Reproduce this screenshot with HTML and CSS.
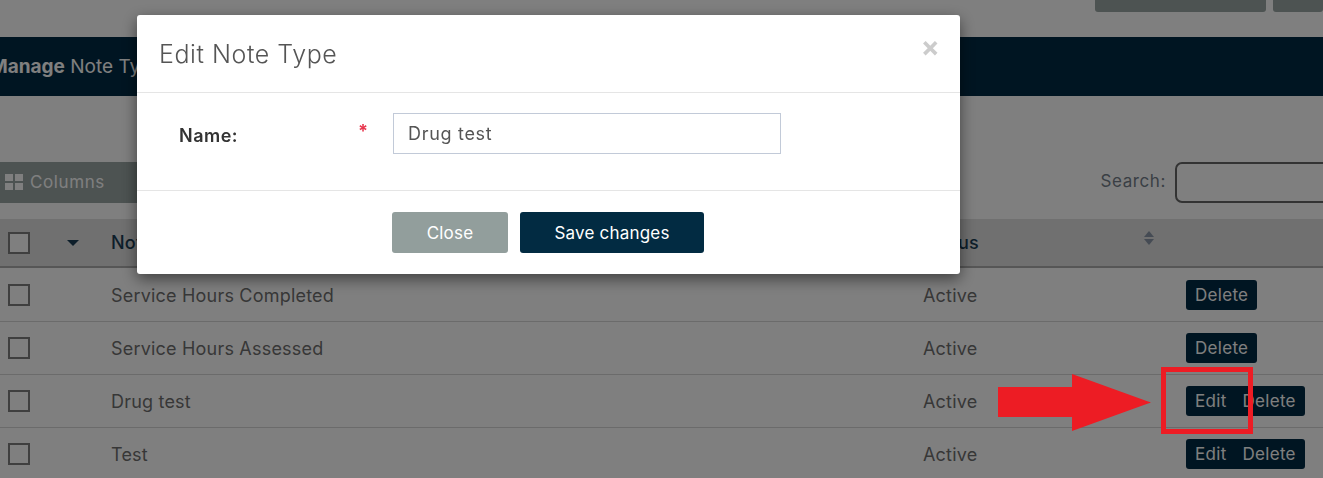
FILE: index.html
```html
<!DOCTYPE html>
<html>
<head>
    <meta charset="utf-8">
    <title>Manage Note Type</title>
    <link rel="stylesheet" href="styles.css">
</head>
<body>

<div class="page">
    <div class="topbar">
        <button class="top-btn top-btn-wide">Manage Agency</button>
        <button class="top-btn top-btn-small">Help</button>
    </div>

    <div class="banner"><span class="banner-text"><b>Manage</b> Note Type</span></div>

    <div class="toolbar">
        <button class="columns-btn">
            <svg class="columns-icon" width="18" height="18" viewBox="0 0 18 18"><path d="M0 1h8v7H0zM10 1h8v7h-8zM0 10h8v7H0zM10 10h8v7h-8z"/></svg>
            Columns
        </button>
        <label class="search-label">Search:</label>
        <input class="search-input" type="text">
    </div>

    <div class="row head">
        <div class="cell-check"><span class="check"></span><span class="caret"></span></div>
        <div>Note Type</div>
        <div class="status-head">Status <span class="sort"><i class="sort-up"></i><i class="sort-down"></i></span></div>
        <div></div>
    </div>
    <div class="row">
        <div class="cell-check"><span class="check"></span></div>
        <div>Service Hours Completed</div>
        <div>Active</div>
        <div><span class="actions"><a>Delete</a></span></div>
    </div>
    <div class="row">
        <div class="cell-check"><span class="check"></span></div>
        <div>Service Hours Assessed</div>
        <div>Active</div>
        <div><span class="actions"><a>Delete</a></span></div>
    </div>
    <div class="row">
        <div class="cell-check"><span class="check"></span></div>
        <div>Drug test</div>
        <div>Active</div>
        <div><span class="actions"><a>Edit</a><a>Delete</a></span></div>
    </div>
    <div class="row">
        <div class="cell-check"><span class="check"></span></div>
        <div>Test</div>
        <div>Active</div>
        <div><span class="actions"><a>Edit</a><a>Delete</a></span></div>
    </div>
</div>

<div class="backdrop"></div>

<div class="modal">
    <div class="modal-header">
        <h4>Edit Note Type</h4>
        <span class="close-x">&times;</span>
    </div>
    <div class="modal-body">
        <label class="name-label">Name:</label>
        <span class="required">*</span>
        <input class="name-input" type="text" value="Drug test">
    </div>
    <div class="modal-footer">
        <button class="btn btn-close">Close</button>
        <button class="btn btn-save">Save changes</button>
    </div>
</div>

<svg class="annotation" width="1323" height="478" viewBox="0 0 1323 478">
    <polygon points="998,387 1072,387 1072,374 1151,402.5 1072,431 1072,417 998,417" fill="#ed1c24"/>
    <rect x="1163.5" y="369.5" width="87" height="62" fill="none" stroke="#ed1c24" stroke-width="5"/>
</svg>

</body>
</html>
```
FILE: styles.css
```css
html, body {
    margin: 0;
    height: 100%;
    overflow: hidden;
}

body {
    background: #fff;
    font-family: "Inter", "Open Sans", sans-serif;
    color: #6f6f6f;
    font-size: 18px;
    letter-spacing: .2px;
}

.page {
    width: 1323px;
    height: 478px;
    overflow: hidden;
}

.topbar {
    display: flex;
    justify-content: flex-end;
    gap: 7px;
    height: 12px;
    margin-bottom: 25px;
    overflow: hidden;
}

.top-btn {
    height: 42px;
    margin-top: -30px;
    padding: 0 0 5px;
    border: 0;
    border-radius: 3px;
    background: #9aa6a4;
    color: #fff;
    font: 15px "Inter", sans-serif;
}
.top-btn-wide { width: 171px; padding-left: 40px; }
.top-btn-small { width: 50px; }

.banner {
    height: 59px;
    line-height: 59px;
    background: #012a44;
    color: #fff;
    font-size: 19px;
    letter-spacing: 0;
    white-space: nowrap;
    margin-bottom: 66px;
}
.banner-text {
    display: block;
    margin-left: -10px;
}
.banner-text b { font-weight: 700; }

.toolbar {
    display: flex;
    align-items: center;
    height: 41px;
    margin-bottom: 16px;
}

.columns-btn {
    display: flex;
    align-items: center;
    gap: 7px;
    width: 170px;
    height: 41px;
    padding: 0 0 2px 5px;
    border: 0;
    background: #9aa6a4;
    color: #fff;
    font: 17px "Inter", sans-serif;
    letter-spacing: .6px;
}
.columns-icon { fill: #fff; }

.search-label {
    margin-left: auto;
    margin-right: 9px;
    padding-bottom: 3px;
    color: #757e8a;
    font-size: 17px;
    letter-spacing: .6px;
}
.search-input {
    box-sizing: border-box;
    width: 170px;
    height: 41px;
    margin-right: -22px;
    border: 2px solid #666;
    border-radius: 7px;
    background: #fff;
}

.row {
    display: grid;
    grid-template-columns: 111px 812px 263px 137px;
    align-items: center;
    box-sizing: border-box;
    height: 53px;
    border-bottom: 1px solid #d6d6d6;
}

.head {
    height: 49px;
    margin-bottom: 1px;
    background: #e0e0e0;
    border-bottom: 2px solid #adadad;
    color: #1a3d55;
    font-weight: 500;
}

.cell-check {
    display: flex;
    align-items: center;
    padding-left: 8px;
}
.check {
    box-sizing: border-box;
    width: 22px;
    height: 22px;
    border: 2px solid #7e7e7e;
    background: #fff;
}
.caret {
    width: 0;
    height: 0;
    margin-left: 37px;
    border-left: 6px solid transparent;
    border-right: 6px solid transparent;
    border-top: 6px solid #1a3d55;
}

.status-head {
    position: relative;
}
.sort {
    position: absolute;
    left: 221px;
    top: -1px;
    display: flex;
    flex-direction: column;
    gap: 2px;
}
.sort-up, .sort-down {
    width: 0;
    height: 0;
    border-left: 5px solid transparent;
    border-right: 5px solid transparent;
}
.sort-up { border-bottom: 6px solid #8a97a8; }
.sort-down { border-top: 6px solid #8a97a8; }

.actions {
    display: inline-flex;
    gap: 16px;
    padding: 0 9px;
    height: 30px;
    line-height: 31px;
    border-radius: 3px;
    background: #012a44;
    color: #fff;
    font-size: 17px;
    letter-spacing: .3px;
}

.backdrop {
    position: fixed;
    inset: 0;
    background: rgba(0, 0, 0, .5);
}

.modal {
    position: fixed;
    left: 137px;
    top: 15px;
    width: 823px;
    height: 259px;
    background: #fff;
    border-radius: 3px;
    box-shadow: 0 5px 15px rgba(0, 0, 0, .5);
}

.modal-header {
    display: flex;
    justify-content: space-between;
    box-sizing: border-box;
    height: 78px;
    padding: 0 22px;
    border-bottom: 1px solid #e5e5e5;
}
.modal-header h4 {
    margin: 0;
    line-height: 78px;
    font-size: 25px;
    font-weight: 300;
    letter-spacing: .55px;
    color: #555;
}
.close-x {
    margin-top: 16px;
    margin-right: -2px;
    font-size: 28px;
    line-height: 32px;
    font-weight: 700;
    color: #ccc;
}

.modal-body {
    display: flex;
    box-sizing: border-box;
    height: 98px;
    padding: 20px 0 0 42px;
    border-bottom: 1px solid #e5e5e5;
}
.name-label {
    width: 179px;
    margin-top: 12px;
    font-size: 18px;
    font-weight: 600;
    letter-spacing: .5px;
    color: #333;
}
.required {
    width: 35px;
    color: #e8384f;
    font-size: 18px;
    font-weight: 700;
    line-height: 36px;
    letter-spacing: 0;
}
.name-input {
    box-sizing: border-box;
    width: 388px;
    height: 41px;
    padding: 0 14px;
    border: 1px solid #c2cad8;
    color: #555;
    font: 18px "Inter", sans-serif;
    letter-spacing: .7px;
}

.modal-footer {
    display: flex;
    justify-content: flex-start;
    gap: 12px;
    padding: 21px 0 0 255px;
}
.btn {
    height: 41px;
    border: 0;
    border-radius: 3px;
    color: #fff;
    font: 17px "Inter", sans-serif;
    letter-spacing: .2px;
}
.btn-close { width: 116px; background: #929e9c; }
.btn-save { width: 184px; background: #022b42; }

.annotation {
    position: fixed;
    left: 0;
    top: 0;
}
```
